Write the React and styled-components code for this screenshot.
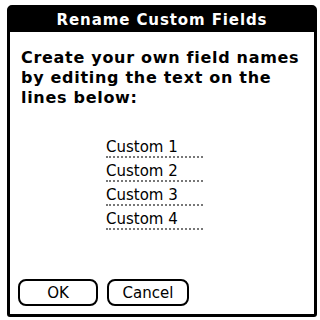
import React from "react";
import styled, { createGlobalStyle } from "styled-components";

const Global = createGlobalStyle`
  html, body { margin: 0; padding: 0; background: #fff; }
  body { width: 320px; height: 320px; overflow: hidden; font-family: "DejaVu Sans", sans-serif; }
`;

const Frame = styled.div`
  box-sizing: border-box;
  margin: 5px 0 0 7px;
  width: 310px;
  height: 312px;
  border: 3px solid #000;
  border-radius: 5px 5px 3px 3px;
  display: flex;
  flex-direction: column;
  background: #fff;
`;

const TitleBar = styled.div`
  height: 24px;
  background: #000;
  color: #fff;
  font-weight: bold;
  font-size: 15px;
  line-height: 24px;
  text-align: center;
  letter-spacing: 0.9px;
`;

const Body = styled.div`
  flex: 1;
  display: flex;
  flex-direction: column;
  padding: 16px 8px 8px 8px;
`;

const Prompt = styled.p`
  margin: 0 0 0 3px;
  font-weight: bold;
  font-size: 16px;
  line-height: 20px;
  letter-spacing: 0.7px;
  color: #000;
`;

const Fields = styled.div`
  display: flex;
  flex-direction: column;
  gap: 4px;
  margin-top: 30px;
  padding-left: 88px;
`;

const Field = styled.div`
  width: 97px;
  height: 20px;
  font-size: 15px;
  line-height: 18px;
  color: #000;
  border-bottom: 2px dotted #777;
  box-sizing: border-box;
  white-space: nowrap;
`;

const Buttons = styled.div`
  margin-top: auto;
  display: flex;
  gap: 9px;
`;

const Button = styled.button`
  box-sizing: border-box;
  width: ${(p) => p.$w}px;
  height: 27px;
  border: 2px solid #000;
  border-radius: 8px;
  background: #fff;
  font-family: "DejaVu Sans", sans-serif;
  font-size: 15px;
  color: #000;
  padding: 0;
`;

export default function App() {
  return (
    <>
      <Global />
      <Frame>
        <TitleBar>Rename Custom Fields</TitleBar>
        <Body>
          <Prompt>
            Create your own field names
            <br />
            by editing the text on the
            <br />
            lines below:
          </Prompt>
          <Fields>
            {["Custom 1", "Custom 2", "Custom 3", "Custom 4"].map((t) => (
              <Field key={t}>{t}</Field>
            ))}
          </Fields>
          <Buttons>
            <Button $w={80}>OK</Button>
            <Button $w={82}>Cancel</Button>
          </Buttons>
        </Body>
      </Frame>
    </>
  );
}
